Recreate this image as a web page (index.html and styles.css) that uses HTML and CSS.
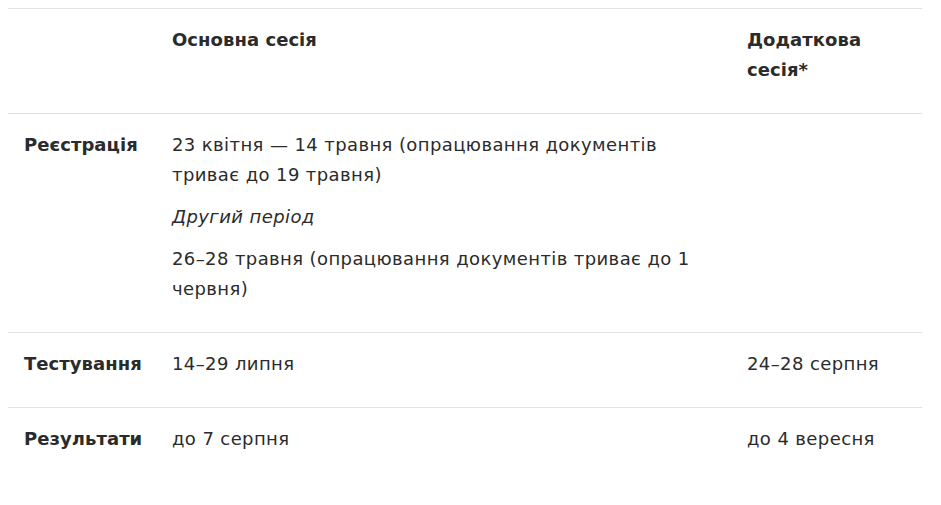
FILE: index.html
```html
<!DOCTYPE html>
<html lang="uk">
<head>
<meta charset="utf-8">
<link rel="stylesheet" href="styles.css">
</head>
<body>
<table class="schedule">
  <colgroup>
    <col class="c1">
    <col class="c2">
    <col class="c3">
  </colgroup>
  <thead>
    <tr>
      <th></th>
      <th>Основна сесія</th>
      <th>Додаткова сесія*</th>
    </tr>
  </thead>
  <tbody>
    <tr>
      <th>Реєстрація</th>
      <td>
        <p>23 квітня — 14 травня (опрацювання документів триває до 19 травня)</p>
        <p><em>Другий період</em></p>
        <p>26–28 травня (опрацювання документів триває до 1 червня)</p>
      </td>
      <td></td>
    </tr>
    <tr>
      <th>Тестування</th>
      <td><p>14–29 липня</p></td>
      <td><p>24–28 серпня</p></td>
    </tr>
    <tr>
      <th>Результати</th>
      <td><p>до 7 серпня</p></td>
      <td><p>до 4 вересня</p></td>
    </tr>
  </tbody>
</table>
</body>
</html>
```
FILE: styles.css
```css
body {
  margin: 8px;
  background: #fff;
  color: #2b2b2b;
  font-family: "DejaVu Sans", sans-serif;
  font-size: 18px;
  letter-spacing: 0.4px;
  line-height: 30px;
}
.schedule {
  width: 914px;
  border-collapse: collapse;
  table-layout: fixed;
}
.c1 { width: 148px; }
.c2 { width: 575px; }
.c3 { width: 191px; }
.schedule th,
.schedule td {
  text-align: left;
  vertical-align: top;
  padding: 16px 16px 28px;
  border-top: 1px solid #e2e2e8;
}
.schedule th {
  font-weight: 700;
  letter-spacing: 0.05px;
}
.schedule p { margin: 0 0 12px; }
.schedule p:last-child { margin-bottom: 0; }
.schedule em { font-style: italic; }
```
